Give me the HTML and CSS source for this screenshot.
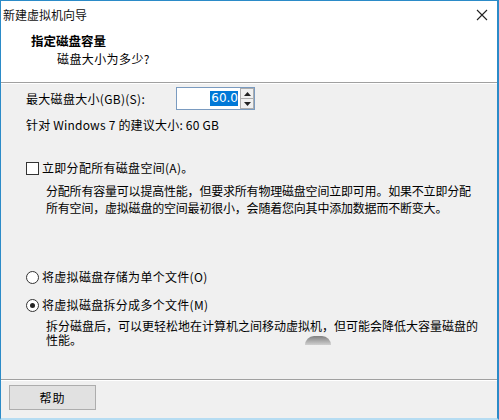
FILE: index.html
```html
<!DOCTYPE html>
<html lang="zh-CN">
<head>
    <meta charset="UTF-8">
    <title>新建虚拟机向导</title>
    <link rel="stylesheet" href="styles.css">
</head>
<body>
    <div class="window">
        <div class="top">
            <div class="titlebar">
                <span class="title">新建虚拟机向导</span>
                <span class="close">
                    <svg width="12" height="12" viewBox="0 0 12 12"><path d="M1 1L11 11M11 1L1 11" stroke="#222" stroke-width="1.1"/></svg>
                </span>
            </div>
            <div class="page-head">
                <div class="page-title">指定磁盘容量</div>
                <div class="page-sub">磁盘大小为多少?</div>
            </div>
        </div>

        <div class="content">
            <div class="size-row">
                <label class="size-label">最大磁盘大小(GB)(S):</label>
                <div class="spin">
                    <div class="spin-field"><span class="sel">60.0</span></div>
                    <div class="spin-btns">
                        <div class="spin-btn">
                            <svg width="7" height="4" viewBox="0 0 7 4"><path d="M0 4L3.5 0L7 4Z" fill="#222"/></svg>
                        </div>
                        <div class="spin-btn">
                            <svg width="7" height="4" viewBox="0 0 7 4"><path d="M0 0L3.5 4L7 0Z" fill="#222"/></svg>
                        </div>
                    </div>
                </div>
            </div>
            <div class="hint">针对 Windows 7 的建议大小: 60 GB</div>

            <div class="option check-row">
                <span class="checkbox"></span>
                <span>立即分配所有磁盘空间(A)。</span>
            </div>
            <p class="desc">分配所有容量可以提高性能，但要求所有物理磁盘空间立即可用。如果不立即分配<br>所有空间，虚拟磁盘的空间最初很小，会随着您向其中添加数据而不断变大。</p>

            <div class="option radio-row first">
                <span class="radio"></span>
                <span>将虚拟磁盘存储为单个文件(O)</span>
            </div>
            <div class="option radio-row">
                <span class="radio on"></span>
                <span>将虚拟磁盘拆分成多个文件(M)</span>
            </div>
            <p class="desc tight">拆分磁盘后，可以更轻松地在计算机之间移动虚拟机，但可能会降低大容量磁盘的<br>性能。</p>
            <span class="cursor-blob"></span>
        </div>

        <div class="footer">
            <button class="help-btn">帮助</button>
        </div>
    </div>
</body>
</html>
```

FILE: styles.css
```css
body {
    margin: 0;
    padding: 0;
    font-family: "Noto Sans CJK SC", "Noto Sans", sans-serif;
    font-size: 12px;
    color: #000;
    background: #f0f0f0;
}

.window {
    width: 499px;
    height: 420px;
    box-sizing: border-box;
    border-top: 1px solid #2b8bc8;
    border-left: 1px solid #2b8bc8;
    border-right: 2px solid #2b8bc8;
    border-bottom: 2px solid #b5dcf2;
    background: #f0f0f0;
    display: flex;
    flex-direction: column;
}

/* white title + header area */
.top {
    background: #fff;
    height: 81px;
    border-bottom: 1px solid #a0a0a0;
    box-shadow: 0 1px 0 #fff;
}

.titlebar {
    height: 26px;
    display: flex;
    align-items: center;
    justify-content: space-between;
    padding: 0 9px 0 2px;
}

.title {
    font-size: 12px;
    color: #111;
}

.close {
    display: flex;
    margin-top: 1px;
}

.page-head {
    padding: 5px 0 0 30px;
}

.page-title {
    font-weight: bold;
    font-size: 12.5px;
    line-height: 18px;
}

.page-sub {
    margin-top: 1px;
    padding-left: 26px;
    line-height: 16px;
    letter-spacing: 0.4px;
}

.content {
    flex-grow: 1;
    position: relative;
    padding: 4px 0 0 25px;
    border-bottom: 1px solid #a0a0a0;
    box-shadow: 0 1px 0 #fff;
}

.size-row {
    display: flex;
    align-items: center;
    height: 23px;
}

.size-label {
    width: 150px;
    letter-spacing: 0.3px;
}

.spin {
    display: flex;
    height: 21px;
    border: 1px solid #7a9bc0;
    background: #fff;
}

.spin-field {
    width: 61px;
    display: flex;
    justify-content: flex-end;
    align-items: center;
    padding-right: 1px;
    font-family: "DejaVu Sans", sans-serif;
    font-size: 12px;
}

.sel {
    background: #0078d7;
    color: #fff;
    line-height: 15px;
    padding: 0 0 0 1px;
}

.spin-btns {
    display: flex;
    flex-direction: column;
    width: 14px;
    border-left: 1px solid #fff;
}

.spin-btn {
    flex: 1;
    display: flex;
    align-items: center;
    justify-content: center;
    background: #f0f0f0;
    border: 1px solid #adadad;
}

.spin-btn + .spin-btn {
    border-top: none;
}

.hint {
    margin-top: 7px;
    letter-spacing: 0.2px;
    line-height: 16px;
}

.option {
    display: flex;
    align-items: center;
    letter-spacing: 0.3px;
    line-height: 16px;
}

.check-row {
    margin-top: 27px;
}

.checkbox {
    width: 11px;
    height: 11px;
    border: 1px solid #333;
    background: #fff;
    margin-right: 3px;
}

.desc {
    margin: 6px 0 0 20px;
    line-height: 17px;
    letter-spacing: -0.2px;
}

.desc.tight {
    margin-top: 6px;
    line-height: 14px;
    letter-spacing: 0;
}

.radio-row.first {
    margin-top: 53px;
}

.radio-row + .radio-row {
    margin-top: 12px;
}

.radio {
    width: 11px;
    height: 11px;
    border: 1px solid #333;
    border-radius: 50%;
    background: #fff;
    margin-right: 3px;
    position: relative;
}

.radio.on::after {
    content: "";
    position: absolute;
    left: 3px;
    top: 3px;
    width: 5px;
    height: 5px;
    border-radius: 50%;
    background: #222;
}

/* leftover of the busy cursor in the shot */
.cursor-blob {
    position: absolute;
    left: 304px;
    top: 253px;
    width: 26px;
    height: 9px;
    border-radius: 13px 13px 0 0;
    background: linear-gradient(#808080, #d0d0d0);
}

.footer {
    height: 38px;
    padding: 5px 0 0 8px;
    box-sizing: border-box;
}

.help-btn {
    width: 87px;
    height: 25px;
    border: 1px solid #adadad;
    background: #e1e1e1;
    font-family: "Noto Sans CJK SC", sans-serif;
    font-size: 12px;
    letter-spacing: 1px;
    padding: 0;
}
```
